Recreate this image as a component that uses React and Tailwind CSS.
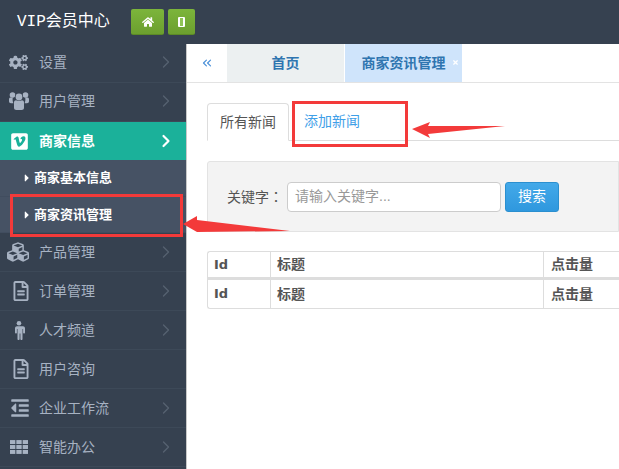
import React from "react";
import { FaCogs, FaVimeoSquare, FaCubes, FaRegFileAlt, FaOutdent, FaHome, FaCaretRight, FaTimes } from "react-icons/fa";
import { ChevronRight, ChevronsLeft } from "lucide-react";

const font = { fontFamily: '"Liberation Sans","Noto Sans CJK SC",sans-serif' };

function UsersIcon() {
  return (
    <svg width="20" height="20" viewBox="0 0 20 20" fill="currentColor">
      <circle cx="3.5" cy="4" r="2.8" />
      <circle cx="16.5" cy="4" r="2.8" />
      <path d="M0 8.2c0-1 .8-1.6 1.6-1.6h2.2c-.4 2-.2 4 .6 5.6H2C.8 12.2 0 11.4 0 10.2z" />
      <path d="M20 8.2c0-1-.8-1.6-1.6-1.6h-2.2c.4 2 .2 4-.6 5.600H18c1.200 0 2-.8 2-2z" />
      <circle cx="10" cy="6" r="4" fill="#364150" />
      <circle cx="10" cy="6" r="3.4" />
      <path d="M5 11.5c0-1.4 1-2.2 2-2.2 1.6 1 4.400 1 6 0 1 0 2 .8 2 2.200v5.200c0 1.300-1 2.300-2.300 2.300H7.300c-1.300 0-2.300-1-2.300-2.300z" />
    </svg>
  );
}

function MaleIcon() {
  return (
    <svg width="12" height="19" viewBox="0 0 12 19" fill="currentColor">
      <circle cx="6" cy="2.300" r="2.300" />
      <path d="M2 5.200h8c1.100 0 2 .9 2 2v4.300c0 .6-.4 1-.9 1s-1-.4-1-1V8h-.6v10c0 .6-.4 1-1 1s-1.100-.4-1.100-1v-5.500h-.8V18c0 .6-.5 1-1.100 1s-1-.4-1-1V8h-.6v3.500c0 .6-.4 1-1 1s-.9-.4-.9-1V7.200c0-1.100.9-2 2-2z" />
    </svg>
  );
}

function ThIcon() {
  const cells = [];
  for (let r = 0; r < 3; r++) {
    for (let c = 0; c < 3; c++) {
      cells.push(<rect key={`${r}${c}`} x={c * 6.4} y={r * 5} width="5.400" height="4" />);
    }
  }
  return (
    <svg width="18" height="14" viewBox="0 0 18.200 14" fill="currentColor">
      {cells}
    </svg>
  );
}

function Row({ icon, label, arrow = true, pad = "pl-[9px]", lift = false }) {
  return (
    <div className={`h-[39px] flex items-center border-b border-[#3d4958] text-[#a7b2c2] text-[14px] shrink-0 ${lift ? "pb-[2px]" : ""}`}>
      <div className={`w-[39px] ${pad} flex items-center shrink-0`}>{icon}</div>
      <span className="flex-1">{label}</span>
      {arrow && <ChevronRight size={20} strokeWidth={1.6} className="mr-[10px] text-[#566170]" />}
    </div>
  );
}

function Sub({ label, h }) {
  return (
    <div className={`${h} flex items-center pl-[21px] text-white text-[13px] font-bold gap-[1px] border-b border-[#414d5f]`}>
      <FaCaretRight size={12} />
      <span>{label}</span>
    </div>
  );
}

const cols = ["Id", "标题", "点击量"];

function TableRow({ cls }) {
  return (
    <div className={`flex ${cls}`}>
      <div className="w-[63px] pl-[6px] border-r border-[#dddddd] flex items-center font-['DejaVu_Sans'] text-[13px]">{cols[0]}</div>
      <div className="w-[273px] pl-[6px] border-r border-[#dddddd] flex items-center">{cols[1]}</div>
      <div className="pl-[7px] flex items-center">{cols[2]}</div>
    </div>
  );
}

export default function App() {
  return (
    <div className="w-[619px] h-[469px] overflow-hidden relative bg-white flex flex-col" style={font}>
      <header className="h-[44px] bg-[#364150] flex items-center shrink-0">
        <span className="ml-[17px] w-[114px] text-white text-[16px]" style={{ fontFamily: '"Liberation Mono","Noto Sans CJK SC",monospace' }}>VIP会员中心</span>
        <div className="w-[33px] h-[26px] rounded-[2px] bg-linear-to-b from-[#7cb53b] to-[#6c9f2f] border-b border-[#5c8a26] flex items-center justify-center text-white">
          <FaHome size={12} />
        </div>
        <div className="ml-[4px] w-[27px] h-[26px] rounded-[2px] bg-linear-to-b from-[#7cb53b] to-[#6c9f2f] border-b border-[#5c8a26] flex items-center justify-center">
          <div className="w-[7px] h-[10px] rounded-[1px] border-x-[2px] border-y border-white bg-[#8fc456]" />
        </div>
      </header>
      <div className="flex flex-1 min-h-0">
        <aside className="w-[186px] bg-[#364150] shrink-0 flex flex-col">
          <Row icon={<FaCogs size={19} />} label="设置" lift />
          <Row icon={<UsersIcon />} label="用户管理" lift />
          <div className="h-[38px] flex items-center bg-[#1bb19a] text-white text-[14px] font-bold shrink-0">
            <div className="w-[39px] pl-[10px] flex items-center"><FaVimeoSquare size={19} /></div>
            <span className="flex-1">商家信息</span>
            <ChevronRight size={20} strokeWidth={2.6} className="mr-[10px]" />
          </div>
          <div className="bg-[#465264] h-[73px] shrink-0 flex flex-col">
            <Sub label="商家基本信息" h="h-[37px]" />
            <Sub label="商家资讯管理" h="h-[36px]" />
          </div>
          <Row icon={<FaCubes size={22} />} label="产品管理" pad="pl-[7px]" />
          <Row icon={<FaRegFileAlt size={20} />} label="订单管理" pad="pl-[11px]" />
          <Row icon={<MaleIcon />} label="人才频道" pad="pl-[13px]" />
          <Row icon={<FaRegFileAlt size={20} />} label="用户咨询" arrow={false} pad="pl-[11px]" />
          <Row icon={<FaOutdent size={20} />} label="企业工作流" pad="pl-[10px]" />
          <Row icon={<ThIcon />} label="智能办公" pad="pl-[10px]" />
        </aside>
        <main className="flex-1 min-w-0 border-l border-[#c8c8c8] flex flex-col overflow-hidden">
          <div className="h-[39px] flex border-b border-[#e3e3e3] shrink-0">
            <div className="w-[40px] flex items-center justify-center text-[#4a90d9]"><ChevronsLeft size={14} strokeWidth={2} /></div>
            <div className="w-[117px] bg-[#ecf0f1] flex items-center justify-center text-[#2f75b0] text-[14px] font-bold">首页</div>
            <div className="ml-px w-[117px] bg-[#cfe4fb] flex items-center justify-center text-[#2f75b0] text-[14px] font-bold relative">
              商家资讯管理
              <FaTimes size={7} className="absolute right-[3px] top-[15px] text-white" />
            </div>
          </div>
          <div className="pl-[20px] shrink-0">
            <div className="mt-[20px] h-[38px] flex border-b border-[#dddddd]">
              <div className="w-[82px] h-[38px] bg-white border border-[#dddddd] border-b-white rounded-t-[4px] flex items-center justify-center text-[#555555] text-[14px]">所有新闻</div>
              <div className="pl-[15px] flex items-center text-[#3fa0e8] text-[14px]">添加新闻</div>
            </div>
            <div className="mt-[20px] h-[71px] bg-[#f3f3f3] border border-[#e3e3e3] rounded-l-[3px] flex items-center pl-[19px]">
              <span className="text-[14px] text-[#555555] w-[60px]">关键字<span className="font-['Noto_Sans_CJK_TC']">：</span></span>
              <div className="w-[214px] h-[30px] bg-white border border-[#cccccc] rounded-[4px] flex items-center pl-[7px] text-[14px] text-[#999999]">请输入关键字...</div>
              <div className="ml-[4px] w-[54px] h-[30px] rounded-[3px] bg-linear-to-b from-[#43a9e9] to-[#2f98de] border border-[#2b8fcf] flex items-center justify-center text-white text-[14px]">搜索</div>
            </div>
            <div className="mt-[19px] h-[58px] border border-r-0 border-[#dddddd] rounded-l-[3px] text-[14px] font-bold text-[#555555]">
              <TableRow cls="h-[28px] border-b-[3px] border-[#dddddd]" />
              <TableRow cls="h-[28px]" />
            </div>
          </div>
        </main>
      </div>
      <div className="absolute left-[292px] top-[101px] w-[116px] h-[46px] border-[3px] border-[#f33a3a]" />
      <div className="absolute left-[10px] top-[194px] w-[173px] h-[43px] border-[3px] border-[#f33a3a]" />
      <svg className="absolute left-0 top-0 pointer-events-none" width="619" height="469">
        <polygon points="412,129 430,122 428,126 505,126 428,134 430,138" fill="#f33a3a" />
        <polygon points="183,224 197,216 197,220 290,231 197,232" fill="#f33a3a" />
      </svg>
    </div>
  );
}
